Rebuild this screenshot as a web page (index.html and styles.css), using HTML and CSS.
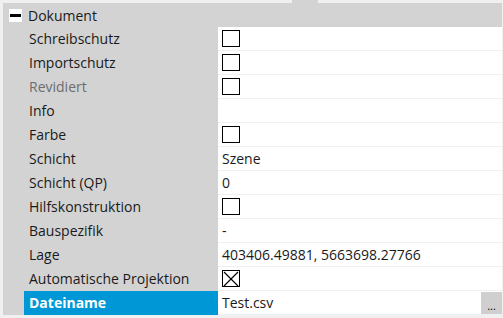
FILE: index.html
```html
<!DOCTYPE html>
<html lang="de">
<head>
<meta charset="utf-8">
<link rel="stylesheet" href="styles.css">
</head>
<body>
<div class="topbar"><span class="tab"></span></div>
<div class="panel">
  <div class="header">
    <span class="toggle"><span class="bar"></span></span>
    <span class="title">Dokument</span>
  </div>
  <div class="rows">
    <div class="row"><div class="label">Schreibschutz</div><div class="value"><span class="cb"></span></div></div>
    <div class="row"><div class="label">Importschutz</div><div class="value"><span class="cb"></span></div></div>
    <div class="row"><div class="label muted">Revidiert</div><div class="value"><span class="cb"></span></div></div>
    <div class="row"><div class="label">Info</div><div class="value"></div></div>
    <div class="row"><div class="label">Farbe</div><div class="value"><span class="cb"></span></div></div>
    <div class="row"><div class="label">Schicht</div><div class="value">Szene</div></div>
    <div class="row"><div class="label">Schicht (QP)</div><div class="value">0</div></div>
    <div class="row"><div class="label">Hilfskonstruktion</div><div class="value"><span class="cb"></span></div></div>
    <div class="row"><div class="label">Bauspezifik</div><div class="value">-</div></div>
    <div class="row"><div class="label">Lage</div><div class="value">403406.49881, 5663698.27766</div></div>
    <div class="row"><div class="label">Automatische Projektion</div><div class="value"><span class="cb checked"><svg width="16" height="16" viewBox="0 0 16 16"><path d="M1 1L15 15M15 1L1 15" stroke="#000" stroke-width="1.2" fill="none"/></svg></span></div></div>
    <div class="row selected"><div class="label">Dateiname</div><div class="value"><span class="text">Test.csv</span><span class="btn">...</span></div></div>
  </div>
</div>
</body>
</html>
```
FILE: styles.css
```css
html, body {
  margin: 0;
  padding: 0;
  background: #f0f0f0;
  width: 503px;
  height: 318px;
  overflow: hidden;
  font-family: "Open Sans", "Noto Sans", sans-serif;
  font-size: 14px;
  color: #1a1a1a;
}
.topbar {
  height: 3px;
  display: flex;
}
.tab {
  margin-left: 292px;
  width: 26px;
  height: 3px;
  background: #d3d3d3;
}
.panel {
  margin-left: 3px;
  width: 499px;
  background: #d3d3d3;
}
.header {
  height: 24px;
  display: flex;
  align-items: center;
}
.toggle {
  margin-left: 6px;
  width: 13px;
  height: 13px;
  background: #fff;
  display: flex;
  align-items: center;
  justify-content: center;
}
.toggle .bar {
  width: 11px;
  height: 3px;
  background: #000;
}
.title {
  margin-left: 6px;
}
.rows {
  padding-left: 21px;
}
.row {
  display: grid;
  grid-template-columns: 194px 1fr;
  height: 24px;
}
.label {
  padding-left: 5px;
  line-height: 24px;
  white-space: nowrap;
}
.label.muted {
  color: #6d6d6d;
}
.value {
  background: #fff;
  border-bottom: 1px solid #f0f0f0;
  height: 23px;
  padding-left: 4px;
  display: flex;
  align-items: center;
  white-space: nowrap;
}
.cb {
  width: 16px;
  height: 15px;
  border: 1px solid #000;
  display: flex;
  align-items: center;
  justify-content: center;
  overflow: hidden;
}
.selected .label {
  background: #0097d7;
  color: #fff;
  font-weight: 700;
}
.selected .value {
  justify-content: space-between;
  padding-right: 0;
}
.btn {
  width: 21px;
  height: 22px;
  margin-top: 1px;
  background: #cfcfcf;
  font-size: 11px;
  line-height: 28px;
  text-align: center;
  color: #000;
}
```
